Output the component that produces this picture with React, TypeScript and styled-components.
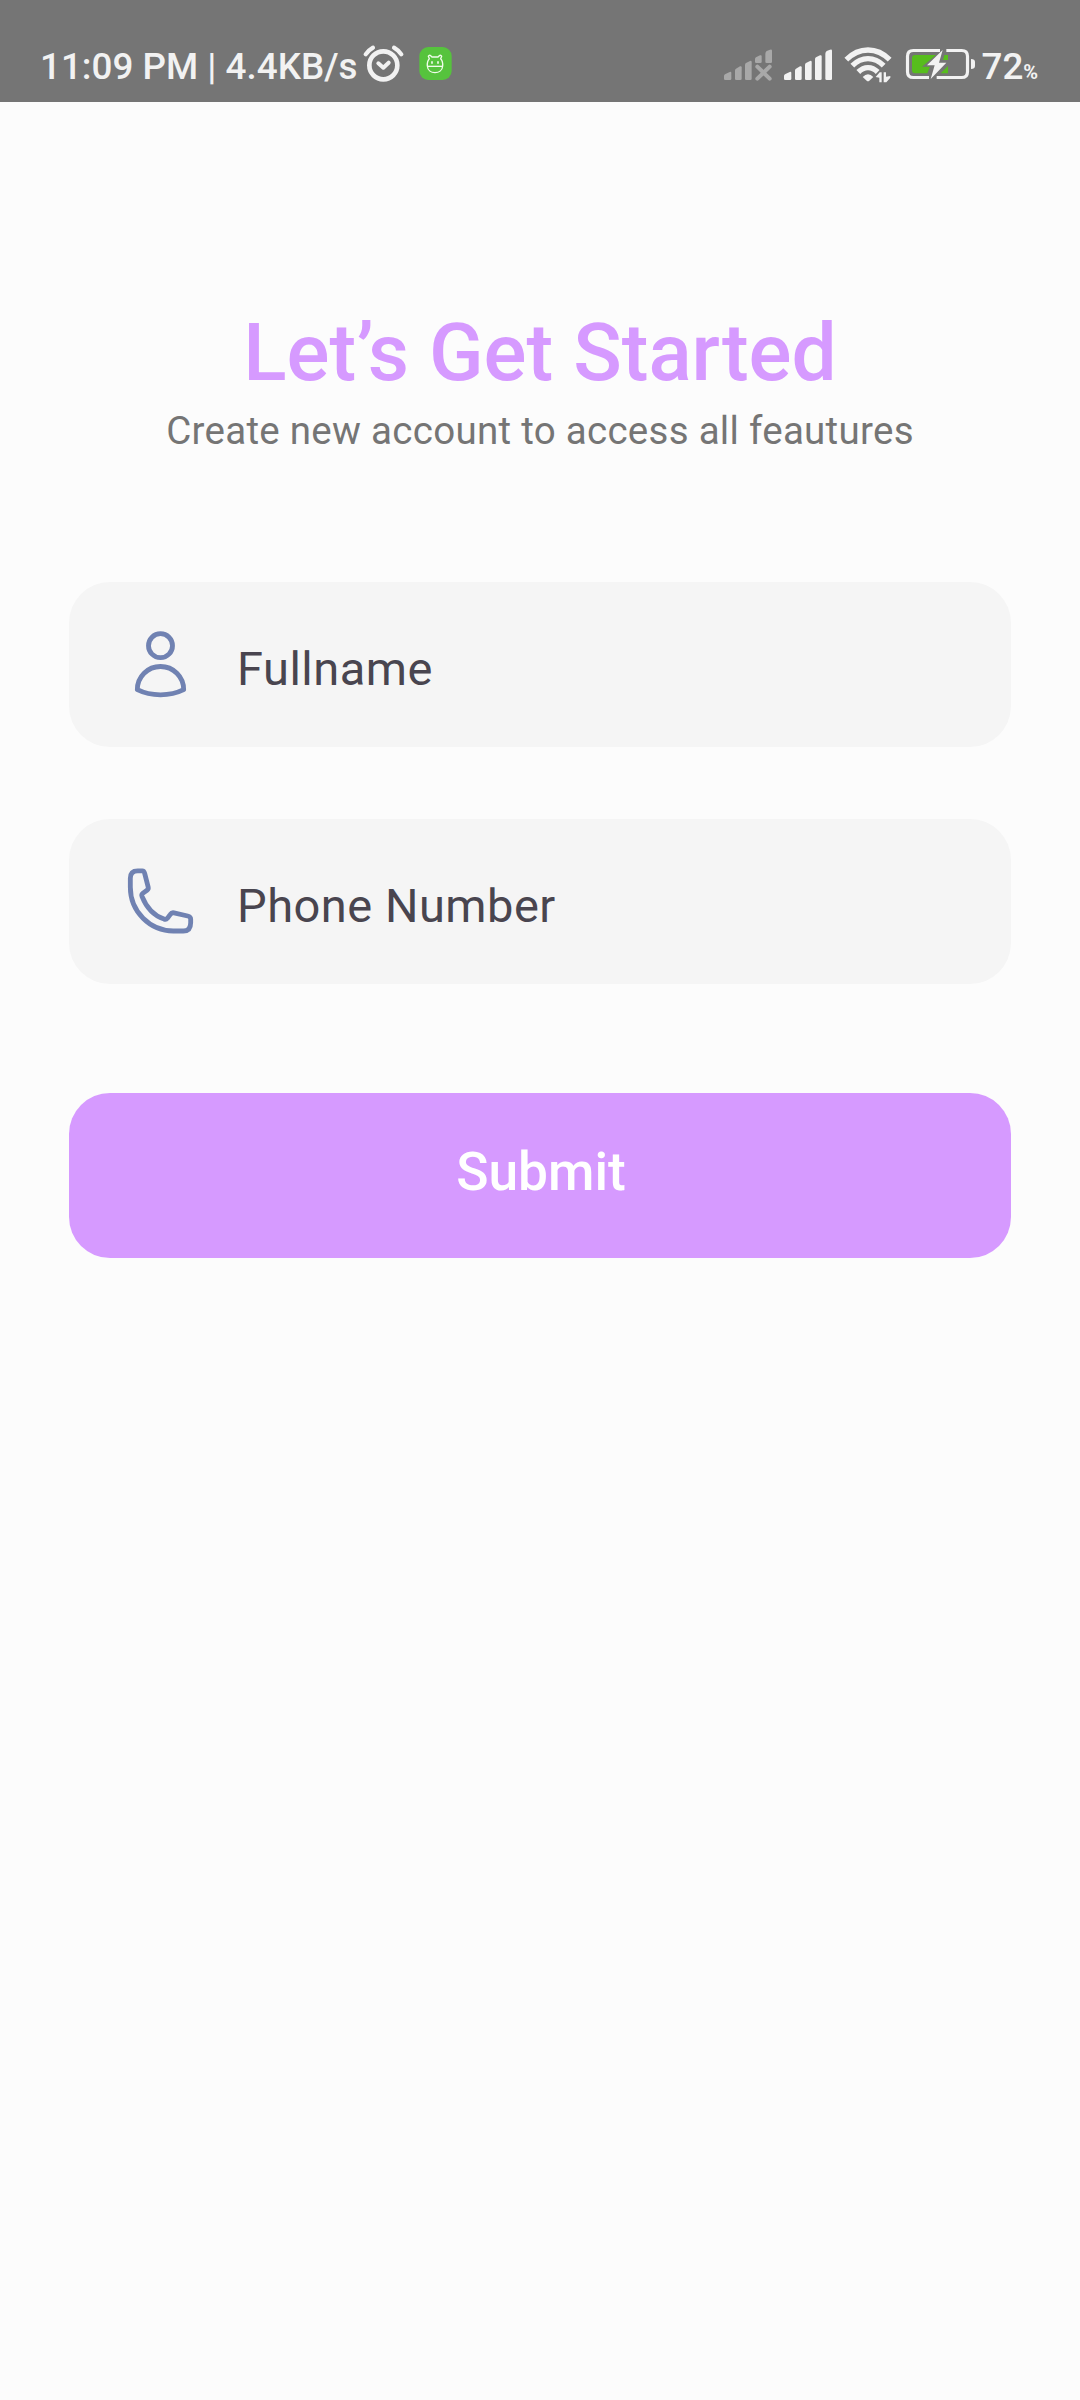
import React from "react";
import styled, { createGlobalStyle } from "styled-components";

const GlobalStyle = createGlobalStyle`
  * { box-sizing: border-box; }
  html, body { margin: 0; padding: 0; background: #fcfcfc; }
  body { font-family: Roboto, "Noto Sans", sans-serif; }
`;

const Screen = styled.div`
  width: 1080px;
  height: 2400px;
  display: flex;
  flex-direction: column;
  background: #fcfcfc;
  overflow: hidden;
`;

const StatusBar = styled.header`
  flex: none;
  height: 102px;
  padding: 43px 40px 0 40px;
  display: flex;
  align-items: flex-start;
  justify-content: space-between;
  background: #757575;
  color: #f2f2f2;
`;

const StatusGroup = styled.div`
  display: flex;
  align-items: flex-start;
`;

const StatusText = styled.span<{ $width: number; $indent?: number }>`
  width: ${(p) => p.$width}px;
  padding-left: ${(p) => p.$indent ?? 0}px;
  font-size: 36.8px;
  font-weight: 500;
  line-height: 47px;
  white-space: nowrap;
`;

const Percent = styled.small`
  font-size: 20px;
  font-weight: 700;
`;

const StatusIcon = styled.svg<{ $gap: number }>`
  display: block;
  flex: none;
  margin: 3px 0 0 ${(p) => p.$gap}px;
  overflow: visible;
`;

const Content = styled.main`
  display: flex;
  flex-direction: column;
  padding: 204px 69px 0;
`;

const Title = styled.h1`
  margin: 0;
  font-size: 80.2px;
  font-weight: 500;
  line-height: 94px;
  text-align: center;
  color: #d69aff;
`;

const Subtitle = styled.p`
  margin: 8px 0 0;
  font-size: 38.5px;
  line-height: 46px;
  letter-spacing: 0.28px;
  text-align: center;
  color: #757575;
`;

const Form = styled.form`
  display: flex;
  flex-direction: column;
  gap: 72px;
  margin-top: 128px;
`;

const Field = styled.label`
  height: 165px;
  padding-left: 41px;
  display: flex;
  align-items: flex-start;
  border-radius: 41px;
  background: #f5f5f5;
`;

const FieldIcon = styled.svg`
  flex: none;
  width: 100px;
  height: 100px;
  margin-top: 28px;
  fill: none;
  stroke: #7082b2;
  stroke-width: 14.5;
  stroke-linejoin: round;
`;

const FieldLabel = styled.span`
  margin: 59px 0 0 27px;
  font-size: 47px;
  line-height: 56px;
  letter-spacing: 0.5px;
  color: #49454f;
`;

const SubmitButton = styled.button`
  height: 165px;
  margin-top: 37px;
  padding: 0 0 7px 2px;
  border: 0;
  border-radius: 41px;
  background: #d69aff;
  color: #fff;
  font-family: inherit;
  font-size: 53.3px;
  font-weight: 500;
  line-height: 62px;
`;

const AlarmIcon = () => (
  <StatusIcon $gap={4} width={43} height={38} viewBox="36 48 129 114">
    <g fill="none" stroke="#f2f2f2" strokeLinecap="round">
      <circle cx="100" cy="106" r="42" strokeWidth="14" />
      <path d="M85 100 L100 113 L116 98" strokeWidth="12" strokeLinejoin="round" />
      <path d="M47 73 Q55 61 69 53 M154 73 Q146 61 132 53" strokeWidth="12.5" />
    </g>
  </StatusIcon>
);

const AppIcon = () => (
  <StatusIcon $gap={14} width={33} height={38} viewBox="206 48 99 114">
    <rect x="207" y="51" width="97" height="99" rx="27" fill="#56c33d" />
    <g fill="none" stroke="#f0fceb" strokeWidth="4" strokeLinejoin="round">
      <path d="M237 86 L234 79 Q236 74 241 77 L245 81 H263 L267 77 Q272 74 274 79 L271 86 Q278 93 277 108 C276 122 265 128 254 128 C243 128 232 122 231 108 Q230 93 237 86 Z" />
      <path d="M231 109 H277" />
      <path d="M245 94 V101 M263 94 V101" strokeWidth="5" />
    </g>
  </StatusIcon>
);

const SIGNAL_FULL = [
  "M222 146 V138 Q222 135 225 133 L239 126 Q244 124 244 129 V146 Q244 150 240 150 H226 Q222 150 222 146 Z",
  "M255 146 V121 Q255 118 258 116 L270 109 Q275 107 275 112 V146 Q275 150 271 150 H259 Q255 150 255 146 Z",
  "M285 146 V105 Q285 101 288 99 L300 93 Q305 91 305 96 V146 Q305 150 301 150 H289 Q285 150 285 146 Z",
  "M315 146 V88 Q315 84 318 82 L330 76 Q335 74 335 79 V146 Q335 150 331 150 H319 Q315 150 315 146 Z",
  "M346 146 V72 Q346 66 350 63 L360 59 Q366 57 366 62 V146 Q366 150 362 150 H350 Q346 150 346 146 Z",
];

const FullSignalIcon = () => (
  <StatusIcon $gap={12} width={48} height={38} viewBox="222 48 144 114">
    {SIGNAL_FULL.map((d) => (
      <path key={d} d={d} fill="#f2f2f2" />
    ))}
  </StatusIcon>
);

const NoSignalIcon = () => (
  <StatusIcon $gap={0} width={48} height={38} viewBox="222 48 144 114">
    {SIGNAL_FULL.slice(0, 3).map((d) => (
      <path key={d} d={d} fill="#a8a8a8" />
    ))}
    <path
      d="M315 96 V88 Q315 84 318 82 L330 76 Q335 74 335 79 V96 Q335 99 331 99 H319 Q315 99 315 96 Z M346 96 V72 Q346 66 350 63 L360 59 Q366 57 366 62 V96 Q366 99 362 99 H350 Q346 99 346 96 Z"
      fill="#a8a8a8"
    />
    <path d="M322 110 L359 146 M359 110 L322 146" stroke="#a8a8a8" strokeWidth="12" strokeLinecap="round" />
  </StatusIcon>
);

const WifiIcon = () => (
  <StatusIcon $gap={12} width={48} height={38} viewBox="402 48 144 114">
    <g fill="none" stroke="#f2f2f2" strokeWidth="16">
      <path d="M409 89 Q438 60 474 60 T539 89" />
      <path d="M427 107 Q448 86 474 86 T521 107" />
      <path d="M445 126 Q458 113 474 113 T503 126" />
    </g>
    <path d="M458 141 Q474 124 490 141 L478 152 Q474 155 470 152 Z" fill="#f2f2f2" />
    <path
      d="M497 141 L509 127 H515 V157 H508 V143 Z M521 157 V127 H528 V140 L541 138 V143 L529 157 Z"
      fill="#f2f2f2"
    />
  </StatusIcon>
);

const BatteryIcon = () => (
  <StatusIcon $gap={14} width={70} height={38} viewBox="48 48 210 114">
    <path
      d="M150 61.500 H70 Q52.500 61.500 52.500 79 V125 Q52.500 142.500 70 142.500 H117 M140 142.500 H215 Q232.500 142.500 232.500 125 V79 Q232.500 61.500 215 61.500 H169"
      fill="none"
      stroke="#f2f2f2"
      strokeWidth="9.500"
    />
    <path d="M75 75 H138 L96 110 H120 L112 130 H75 Q66 130 66 121 V84 Q66 75 75 75 Z" fill="#57bd1d" />
    <path d="M163 75 H174 V90 H159 Z M174 108 V130 H152 Z" fill="#57bd1d" />
    <path d="M158 60 L111 106 H134 L122 147 L169 98 H147 Z" fill="#f2f2f2" />
    <path d="M243 87 Q255 87 255 96 V108 Q255 117 243 117 Z" fill="#f2f2f2" />
  </StatusIcon>
);

const PersonIcon = () => (
  <FieldIcon viewBox="0 0 300 300">
    <circle cx="151.5" cy="107" r="36" />
    <path d="M82 239 C82 200 113 169.5 151.5 169.5 S221 200 221 239 C180 259.500 123 259.500 82 239 Z" />
  </FieldIcon>
);

const PhoneIcon = () => (
  <FieldIcon viewBox="0 -9 300 300">
    <path d="M61 85 Q61 62.500 83 62.500 H97 Q102 62.500 104 70 L114.500 111 Q116 117 111 120.500 L98 130 Q94 133 96 139 Q117 192 162 207 Q168 210 172 205 L181 193 Q185 187 192 188.500 L233 198 Q242 200 242 207 V218 Q242 243 220 243 H190 C120 243 61 185 61 112 Z" />
  </FieldIcon>
);

export default function App() {
  return (
    <>
      <GlobalStyle />
      <Screen>
        <StatusBar>
          <StatusGroup>
            <StatusText $width={318}>11:09 PM | 4.4KB/s</StatusText>
            <AlarmIcon />
            <AppIcon />
          </StatusGroup>
          <StatusGroup>
            <NoSignalIcon />
            <FullSignalIcon />
            <WifiIcon />
            <BatteryIcon />
            <StatusText $width={64} $indent={5.5}>
              72<Percent>%</Percent>
            </StatusText>
          </StatusGroup>
        </StatusBar>
        <Content>
          <Title>Let’s Get Started</Title>
          <Subtitle>Create new account to access all feautures</Subtitle>
          <Form>
            <Field>
              <PersonIcon />
              <FieldLabel>Fullname</FieldLabel>
            </Field>
            <Field>
              <PhoneIcon />
              <FieldLabel>Phone Number</FieldLabel>
            </Field>
            <SubmitButton type="button">Submit</SubmitButton>
          </Form>
        </Content>
      </Screen>
    </>
  );
}
